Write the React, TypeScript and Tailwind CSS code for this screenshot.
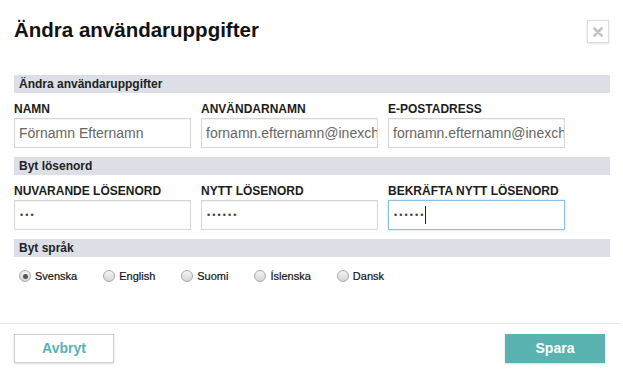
import React from "react";

const font = { fontFamily: '"Liberation Sans", Arial, Helvetica, sans-serif' };

function SectionBar({ title }: { title: string }) {
  return (
    <div className="h-[18px] bg-[#dcdfe6] pl-[5px] text-[12px] font-bold leading-[18px] text-[#222]">
      {title}
    </div>
  );
}

function Label({ children }: { children: React.ReactNode }) {
  return (
    <div className="mt-[9px] h-[14px] text-[12px] font-bold leading-[14px] text-[#1c1c1c] whitespace-nowrap">
      {children}
    </div>
  );
}

function TextBox({ value }: { value: string }) {
  return (
    <input
      readOnly
      value={value}
      className="mt-[2px] block h-[30px] w-[177px] border border-[#d6d6d6] bg-white pl-[4px] pr-0 text-[14px] text-[#666] shadow-[inset_0_1px_1px_rgba(0,0,0,0.05)] outline-none"
      style={font}
    />
  );
}

function PasswordBox({ count, focused }: { count: number; focused?: boolean }) {
  return (
    <div
      className={
        focused
          ? "mt-[2px] flex h-[30px] w-[177px] items-center border border-[#8dbfe8] bg-white pl-[4px] shadow-[0_0_2px_rgba(102,175,233,0.5)]"
          : "mt-[2px] flex h-[30px] w-[177px] items-center border border-[#d6d6d6] bg-white pl-[4px] shadow-[inset_0_1px_1px_rgba(0,0,0,0.05)]"
      }
    >
      <span className="pl-[1px] text-[9px] leading-none tracking-[2.1px] text-[#444]">
        {"•".repeat(count)}
      </span>
      {focused && <span className="ml-[-1px] h-[18px] w-[1px] bg-[#222]" />}
    </div>
  );
}

function Radio({ label, checked }: { label: string; checked?: boolean }) {
  return (
    <div className="flex items-center">
      <div className="flex h-[12px] w-[12px] items-center justify-center rounded-full border border-[#a9a9a9] bg-gradient-to-b from-[#f4f4f4] to-[#d6d6d6]">
        {checked && <div className="h-[5px] w-[5px] rounded-full bg-[#555]" />}
      </div>
      <span className="ml-[4px] text-[11px] leading-[14px] text-[#111] [-webkit-text-stroke:0.2px_#111]">{label}</span>
    </div>
  );
}

export default function App() {
  return (
    <div className="relative h-[374px] w-[623px] overflow-hidden bg-white" style={font}>
      <div className="flex items-start justify-between pl-[14px] pr-[14px] pt-[18px]">
        <h1 className="text-[20.5px] font-bold leading-[24px] text-[#111]">Ändra användaruppgifter</h1>
        <div className="mt-[2px] flex h-[23px] w-[22px] items-center justify-center border border-[#dcdcdc] bg-white shadow-[0_1px_2px_rgba(0,0,0,0.12)]">
          <svg width="10" height="10" viewBox="0 0 10 10">
            <path d="M1.5 1.5 L8.5 8.5 M8.5 1.5 L1.5 8.5" stroke="#c2c2c2" strokeWidth="2.6" strokeLinecap="round" />
          </svg>
        </div>
      </div>

      <div className="ml-[14px] mt-[32px] w-[596px]">
        <SectionBar title="Ändra användaruppgifter" />
        <div className="flex gap-[10px]">
          <div>
            <Label>NAMN</Label>
            <TextBox value="Förnamn Efternamn" />
          </div>
          <div>
            <Label>ANVÄNDARNAMN</Label>
            <TextBox value="fornamn.efternamn@inexchange.se" />
          </div>
          <div>
            <Label>E-POSTADRESS</Label>
            <TextBox value="fornamn.efternamn@inexchange.se" />
          </div>
        </div>

        <div className="mt-[9px]">
          <SectionBar title="Byt lösenord" />
        </div>
        <div className="flex gap-[10px]">
          <div>
            <Label>NUVARANDE LÖSENORD</Label>
            <PasswordBox count={3} />
          </div>
          <div>
            <Label>NYTT LÖSENORD</Label>
            <PasswordBox count={6} />
          </div>
          <div>
            <Label>BEKRÄFTA NYTT LÖSENORD</Label>
            <PasswordBox count={6} focused />
          </div>
        </div>

        <div className="mt-[9px]">
          <SectionBar title="Byt språk" />
        </div>
        <div className="mt-[12px] flex gap-[26px] pl-[5px]">
          <Radio label="Svenska" checked />
          <Radio label="English" />
          <Radio label="Suomi" />
          <Radio label="Íslenska" />
          <Radio label="Dansk" />
        </div>
      </div>

      <div className="mt-[40px] h-[1px] w-[620px] bg-[#e6e6e6]" />

      <div className="flex justify-between pl-[14px] pr-[18px] pt-[10px]">
        <button className="h-[29px] w-[100px] border border-[#cfcfcf] bg-white text-[14px] font-bold text-[#52b3bb] shadow-[0_1px_2px_rgba(0,0,0,0.15)]">
          Avbryt
        </button>
        <button className="h-[29px] w-[100px] bg-[#5ab3b1] text-[14px] font-bold text-white shadow-[0_1px_2px_rgba(0,0,0,0.15)]">
          Spara
        </button>
      </div>
    </div>
  );
}
